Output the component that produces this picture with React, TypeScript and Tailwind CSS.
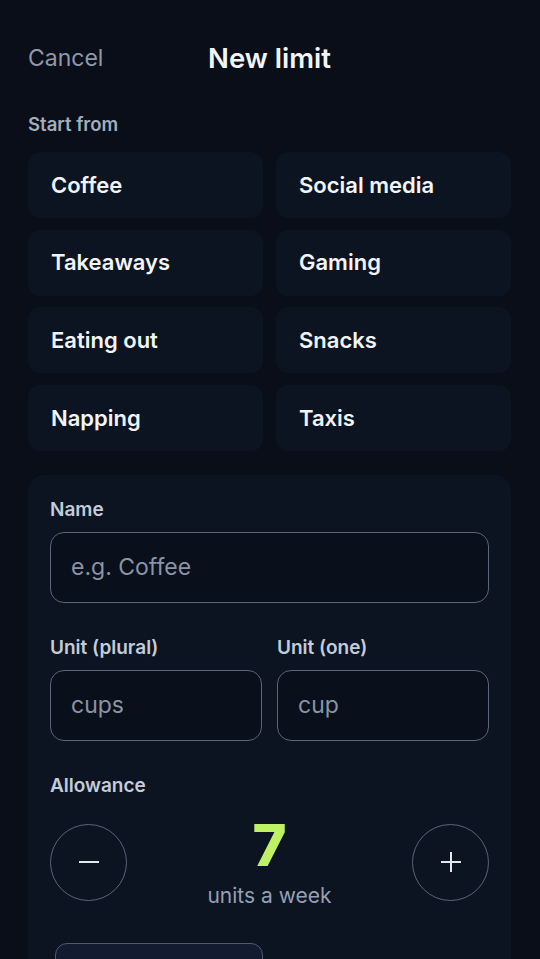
import React from "react";

const presets = [
  "Coffee",
  "Social media",
  "Takeaways",
  "Gaming",
  "Eating out",
  "Snacks",
  "Napping",
  "Taxis",
];

export default function App() {
  return (
    <div
      className="min-h-[959px] w-[540px] overflow-hidden bg-[#090e19] text-white"
      style={{ fontFamily: "Inter, 'Noto Sans', sans-serif" }}
    >
      <div className="pl-[28px] pr-[29px] pt-[40px]">
        {/* Header */}
        <div className="grid h-[36px] grid-cols-[1fr_auto_1fr] items-center">
          <span className="text-[23px] leading-[36px] text-[#8e99ac]">Cancel</span>
          <span className="text-[27.5px] font-semibold leading-[36px] text-[#f1f5f9]">New limit</span>
          <span />
        </div>

        <div className="mt-[36px] text-[18.5px] font-semibold leading-[24px] text-[#a3adbd]">Start from</div>

        <div className="mt-[16px] grid grid-cols-2 gap-x-[13px] gap-y-[11.7px]">
          {presets.map((p) => (
            <div
              key={p}
              className="flex h-[66px] items-center rounded-[12px] bg-[#0c1422] pl-[23px] text-[22px] font-semibold text-[#f1f5f9]"
            >
              {p}
            </div>
          ))}
        </div>

        {/* Form card */}
        <div className="mt-[24px] rounded-t-[16px] bg-[#0c1422] px-[22px] pb-[40px] pt-[23px]">
          <div className="text-[19px] font-semibold leading-[24px] text-[#c3ccd9]">Name</div>
          <div className="mt-[10px] flex h-[71px] items-center rounded-[14px] border border-[#5c6579] bg-[#090f1b] pl-[20px] text-[23px] text-[#8a94a6]">
            e.g. Coffee
          </div>

          <div className="mt-[33px] grid grid-cols-2 gap-x-[15px]">
            <div>
              <div className="text-[19px] font-semibold leading-[24px] text-[#c3ccd9]">Unit (plural)</div>
              <div className="mt-[10px] flex h-[71px] items-center rounded-[14px] border border-[#5c6579] bg-[#090f1b] pl-[20px] text-[23px] text-[#8a94a6]">
                cups
              </div>
            </div>
            <div>
              <div className="text-[19px] font-semibold leading-[24px] text-[#c3ccd9]">Unit (one)</div>
              <div className="mt-[10px] flex h-[71px] items-center rounded-[14px] border border-[#5c6579] bg-[#090f1b] pl-[20px] text-[23px] text-[#8a94a6]">
                cup
              </div>
            </div>
          </div>

          <div className="mt-[33px] text-[19px] font-semibold leading-[24px] text-[#c3ccd9]">Allowance</div>

          <div className="mt-[18px] flex items-center justify-between">
            <div className="flex h-[77px] w-[77px] items-center justify-center rounded-full border border-[#5a6479]">
              <svg width="22" height="22" viewBox="0 0 22 22">
                <line x1="1" y1="11" x2="21" y2="11" stroke="#e5e7eb" strokeWidth="2" />
              </svg>
            </div>
            <div className="flex flex-col items-center">
              <span className="text-[58px] font-extrabold leading-[58px] text-[#bef264]">7</span>
              <span className="mt-[10px] text-[21px] leading-[24px] text-[#94a0b3]">units a week</span>
            </div>
            <div className="flex h-[77px] w-[77px] items-center justify-center rounded-full border border-[#5a6479]">
              <svg width="22" height="22" viewBox="0 0 22 22">
                <line x1="1" y1="11" x2="21" y2="11" stroke="#e5e7eb" strokeWidth="2" />
                <line x1="11" y1="1" x2="11" y2="21" stroke="#e5e7eb" strokeWidth="2" />
              </svg>
            </div>
          </div>

          <div className="ml-[5px] mt-[35px] h-[60px] w-[208px] rounded-[12px] border border-[#4e5a72] bg-[#121b30]" />
        </div>
      </div>
    </div>
  );
}
